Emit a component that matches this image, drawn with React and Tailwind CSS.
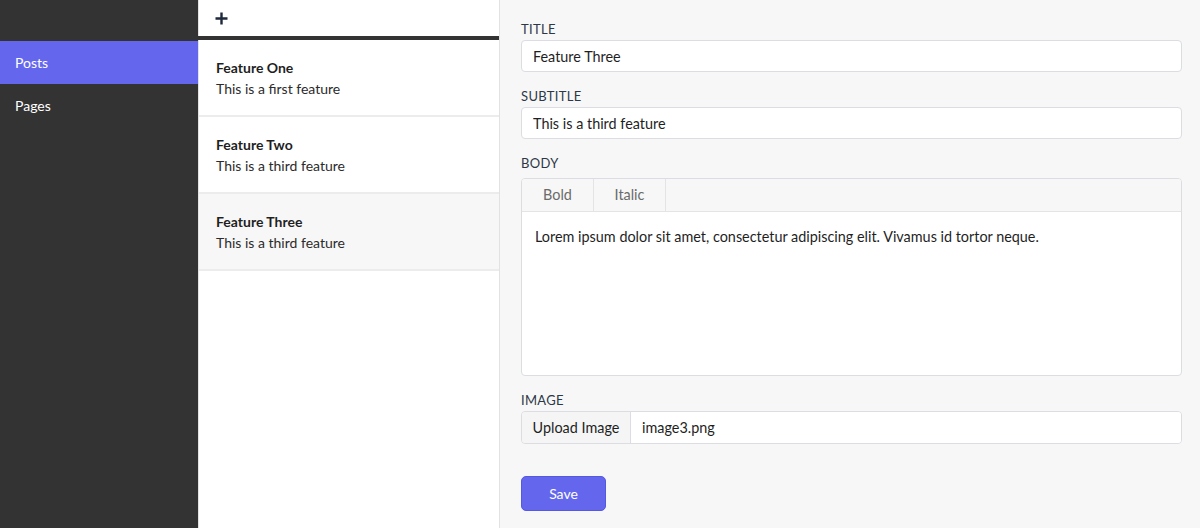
import { useState } from "react";

const posts = [
  { id: 1, title: "Feature One", subtitle: "This is a first feature" },
  { id: 2, title: "Feature Two", subtitle: "This is a third feature" },
  { id: 3, title: "Feature Three", subtitle: "This is a third feature" },
];

function Field({ label, gap = "mb-[4px]", children }) {
  return (
    <div>
      <label className={`block text-[13px] uppercase tracking-wide text-[#2d3748] leading-[13px] ${gap}`}>{label}</label>
      {children}
    </div>
  );
}

export default function App() {
  const [selected, setSelected] = useState(3);

  return (
    <div className="flex h-[528px] w-[1200px] font-['Lato','Noto_Sans',sans-serif] text-[#1f1f1f]">
      {/* Sidebar */}
      <nav className="w-[198px] shrink-0 bg-[#333333] pt-[41px]">
        <div className="h-[43px] px-[15px] flex items-center bg-[#6467ee] text-white text-[14px]">Posts</div>
        <div className="h-[43px] px-[15px] flex items-center text-white text-[14px]">Pages</div>
      </nav>

      {/* Post list */}
      <div className="w-[302px] shrink-0 bg-white border-l border-r border-[#e2e2e2] flex flex-col">
        <div className="h-[36px] flex items-center px-[16px]">
          <svg width="13" height="13" viewBox="0 0 13 13" className="text-[#1e293b]">
            <path d="M6.5 0.5v12M0.5 6.5h12" stroke="currentColor" strokeWidth="2.4" />
          </svg>
        </div>
        <div className="h-[4px] bg-[#333333] -ml-px" />
        {posts.map((p) => (
          <button
            key={p.id}
            onClick={() => setSelected(p.id)}
            className={`text-left h-[77px] px-[17px] pt-px flex flex-col justify-center border-b-2 border-[#ececec] ${
              selected === p.id ? "bg-[#f7f7f7]" : "bg-white"
            }`}
          >
            <span className="text-[14px] font-bold leading-[21px]">{p.title}</span>
            <span className="text-[14px] leading-[21px] text-[#2b2b2b]">{p.subtitle}</span>
          </button>
        ))}
      </div>

      {/* Editor */}
      <div className="flex-1 bg-[#f7f7f7] pl-[21px] pr-[18px] pt-[23px] flex flex-col gap-[18px]">
        <Field label="Title">
          <input
            defaultValue="Feature Three"
            className="w-full h-[32px] px-[11px] bg-white border border-[#dcdde3] rounded-[4px] text-[14.4px] outline-none"
          />
        </Field>
        <Field label="Subtitle">
          <input
            defaultValue="This is a third feature"
            className="w-full h-[32px] px-[11px] bg-white border border-[#dcdde3] rounded-[4px] text-[14.4px] outline-none"
          />
        </Field>
        <Field label="Body" gap="mb-[8px]">
          <div className="border border-[#dcdde3] rounded-[4px] bg-white overflow-hidden">
            <div className="flex h-[33px] bg-[#f7f7f7] border-b border-[#e4e4e4]">
              <button className="w-[72px] border-r border-[#e4e4e4] text-[14.4px] text-[#6b6b6b]">Bold</button>
              <button className="w-[72px] border-r border-[#e4e4e4] text-[14.4px] text-[#6b6b6b]">Italic</button>
            </div>
            <div className="h-[163px] px-[13px] pt-[14px] text-[14.4px] text-[#1f1f1f]">
              Lorem ipsum dolor sit amet, consectetur adipiscing elit. Vivamus id tortor neque.
            </div>
          </div>
        </Field>
        <Field label="Image">
          <div className="flex h-[33px] border border-[#dcdde3] rounded-[4px] overflow-hidden">
            <button className="w-[109px] bg-[#f5f5f5] border-r border-[#dcdde3] text-[14.4px]">Upload Image</button>
            <div className="flex-1 bg-white px-[11px] flex items-center text-[14.4px]">image3.png</div>
          </div>
        </Field>
        <div className="pt-[14px]">
          <button className="w-[85px] h-[35px] rounded-[5px] bg-[#6467ee] border border-[#5558e0] text-white text-[14px]">
            Save
          </button>
        </div>
      </div>
    </div>
  );
}
